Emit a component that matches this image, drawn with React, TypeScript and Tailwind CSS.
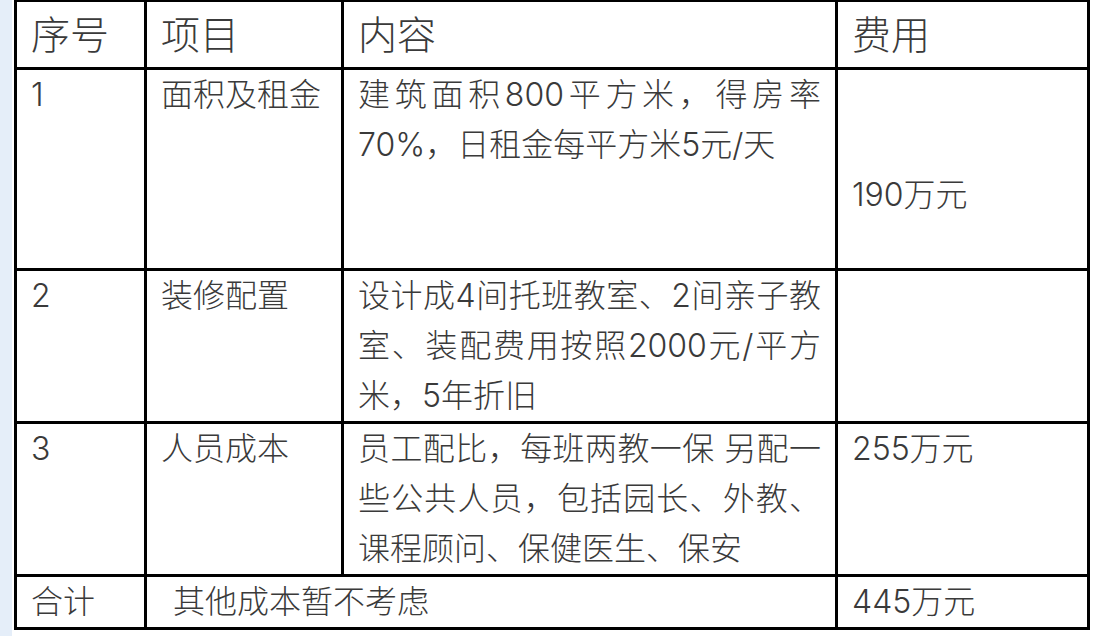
const rows = [
  {
    no: "1",
    item: "面积及租金",
    lines: ["建筑面积800平方米，得房率", "70%，日租金每平方米5元/天"],
    cost: ["", "", "190万元"],
    h: "h-[201px]",
  },
  {
    no: "2",
    item: "装修配置",
    lines: ["设计成4间托班教室、2间亲子教", "室、装配费用按照2000元/平方", "米，5年折旧"],
    cost: [],
    h: "h-[152px]",
  },
  {
    no: "3",
    item: "人员成本",
    lines: ["员工配比，每班两教一保 另配一", "些公共人员，包括园长、外教、", "课程顾问、保健医生、保安"],
    cost: ["255万元"],
    h: "h-[152px]",
  },
];

const cell = "border-r-[3px] border-b-[3px] border-black px-[14px] align-top";

const App = () => {
  return (
    <div
      className="flex min-h-[636px] w-[1100px] bg-white text-[#3a3a3a]"
      style={{ fontFamily: 'Inter, "Noto Sans CJK SC", sans-serif' }}
    >
      <div className="w-[12px] shrink-0 bg-[#e5eef9]" />
      <div className="pl-[2px]">
        <table className="-mt-px table-fixed border-separate border-spacing-0 border-l-[3px] border-t-[3px] border-black text-[32px] font-light leading-[50px]">
          <colgroup>
            <col className="w-[130px]" />
            <col className="w-[197px]" />
            <col className="w-[494px]" />
            <col className="w-[252px]" />
          </colgroup>
          <thead>
            <tr className="h-[68px] text-[39px]">
              <th className="border-r-[3px] border-b-[3px] border-black px-[14px] text-left align-middle font-light">序号</th>
              <th className="border-r-[3px] border-b-[3px] border-black px-[14px] text-left align-middle font-light">项目</th>
              <th className="border-r-[3px] border-b-[3px] border-black px-[14px] text-left align-middle font-light">内容</th>
              <th className="border-r-[3px] border-b-[3px] border-black px-[14px] text-left align-middle font-light">费用</th>
            </tr>
          </thead>
          <tbody>
            {rows.map((r) => (
              <tr key={r.no} className={r.h}>
                <td className={cell}>{r.no}</td>
                <td className={cell}>{r.item}</td>
                <td className={cell}>
                  {r.lines.map((line, i) => (
                    <span
                      key={i}
                      className={
                        i < r.lines.length - 1
                          ? "block text-justify [text-align-last:justify]"
                          : "block"
                      }
                    >
                      {line}
                    </span>
                  ))}
                </td>
                <td className={cell}>
                  {r.cost.map((c, i) => (
                    <span key={i} className="block h-[50px]">
                      {c}
                    </span>
                  ))}
                </td>
              </tr>
            ))}
            <tr className="h-[50px]">
              <td className={cell}>合计</td>
              <td colSpan={2} className={`${cell} pl-[26px]`}>
                其他成本暂不考虑
              </td>
              <td className={cell}>445万元</td>
            </tr>
          </tbody>
        </table>
      </div>
    </div>
  );
};

export default App;
